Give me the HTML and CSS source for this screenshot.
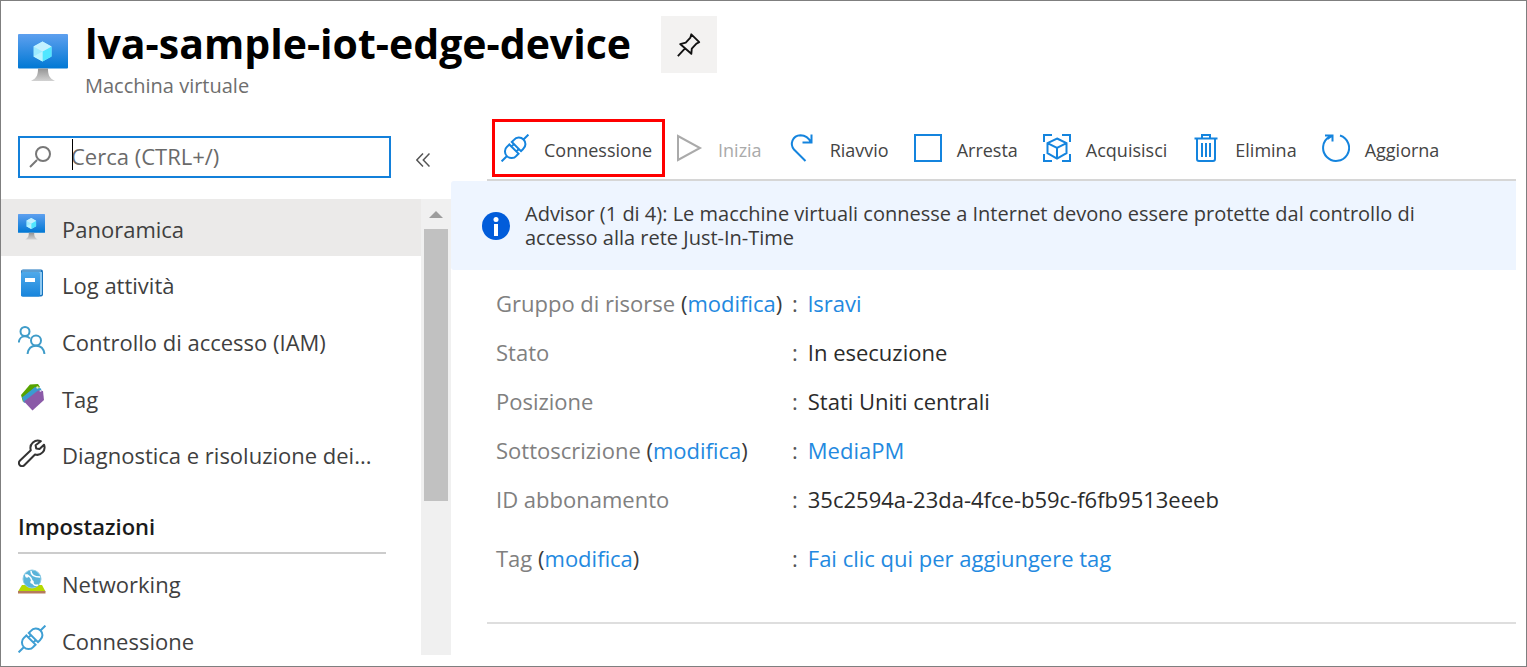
FILE: index.html
```html
<!DOCTYPE html>
<html lang="it">
<head>
<meta charset="utf-8">
<title>lva-sample-iot-edge-device</title>
<link rel="stylesheet" href="styles.css">
</head>
<body>
<svg class="defs" aria-hidden="true">
  <defs>
    <linearGradient id="screen" x1="0" y1="0" x2="0" y2="1"><stop offset="0" stop-color="#5ea0ef"/><stop offset="1" stop-color="#0078d4"/></linearGradient>
    <linearGradient id="stand" x1="0" y1="0" x2="0" y2="1"><stop offset="0" stop-color="#949494"/><stop offset="1" stop-color="#d2d2d2"/></linearGradient>
    <linearGradient id="book" x1="0" y1="0" x2="0" y2="1"><stop offset="0" stop-color="#4fa9ea"/><stop offset="1" stop-color="#1785dc"/></linearGradient>
    <symbol id="vm" viewBox="0 0 50 48">
      <rect width="50" height="34.500" rx="1" fill="url(#screen)"/>
      <path d="M20 34.500h10c0 6 1 9.500 7 12.500H13c6-3 7-6.500 7-12.500z" fill="url(#stand)"/>
      <path d="M24.500 7.500 33.500 12.500v10l-9 5-9-5v-10z" fill="#9cebff"/>
      <path d="M24.500 17.500l9-5v10l-9 5z" fill="#50e6ff"/>
      <path d="M24.500 7.500l9 5-9 5-9-5z" fill="#c3f1ff"/>
      <path d="M15.500 22.500l9-5v10z" fill="#b8f3ff"/>
    </symbol>
    <symbol id="plug" viewBox="0 0 28 28">
      <g fill="none" stroke="currentColor" stroke-width="2" transform="rotate(-45 14 14)">
        <path d="M-5 14H2M26 14h7M12.500 7.500H9.500a6.500 6.500 0 0 0-7 6.500 6.500 6.500 0 0 0 7 6.500h3zM16 7.500h3a6.500 6.500 0 0 1 7 6.500 6.500 6.500 0 0 1-7 6.500h-3zM12.500 10.500H16M12.500 17.500H16"/>
      </g>
    </symbol>
  </defs>
</svg>
<div class="frame">
  <header class="header">
    <svg class="header-icon" aria-hidden="true"><use href="#vm"/></svg>
    <div class="heading">
      <h1>lva-sample-iot-edge-device</h1>
      <p>Macchina virtuale</p>
    </div>
    <button class="pin" type="button" aria-label="Aggiungi">
      <svg viewBox="0 0 28 28" aria-hidden="true"><path d="M2 26 9.500 18M16.500 2.500 25 11l-3 1.500-5 5.500-.5 5.500L4.500 13l6-1.500 5-5.500z" fill="none" stroke="#111" stroke-width="2" stroke-linejoin="round"/></svg>
    </button>
  </header>

  <div class="body">
    <aside class="sidebar">
      <div class="search-row">
        <div class="search">
          <svg viewBox="0 0 22 22" aria-hidden="true"><path d="M1 21 8 14" /><circle cx="14" cy="8" r="7"/></svg>
          <input type="text" aria-label="Cerca" placeholder="Cerca (CTRL+/)">
          <span class="caret"></span>
        </div>
        <button class="collapse" type="button" aria-label="Comprimi">
          <svg viewBox="0 0 14 14" aria-hidden="true"><path d="M7 .5.800 7 7 13.500M13.500.5 7.300 7l6.200 6.500"/></svg>
        </button>
      </div>
      <div class="nav-wrap">
        <nav class="nav">
          <ul class="nav-list nav-main">
            <li><a class="nav-item selected" href="#"><svg viewBox="0 0 28 28" aria-hidden="true"><use href="#vm" width="27" height="26" y="1"/></svg>Panoramica</a></li>
            <li><a class="nav-item" href="#"><svg viewBox="0 0 28 28" aria-hidden="true"><rect x="3" y="0.500" width="22" height="27" rx="2" fill="#1673bd"/><path d="M5 3h19v22a1 1 0 0 1-1 1H5z" fill="#8fcaf3"/><rect x="3" y="3" width="19" height="24.500" rx="1.500" fill="url(#book)"/><path d="M4 2h19" stroke="#9cc9e8"/><rect x="7" y="9" width="10" height="4" fill="#fff"/></svg>Log attività</a></li>
            <li><a class="nav-item" href="#"><svg viewBox="0 0 28 28" aria-hidden="true"><g fill="none" stroke="#3f9cc9" stroke-width="2"><circle cx="7" cy="5.500" r="4.500"/><path d="M.8 16.500C1 12.500 4 10.300 7 10.300c2 0 4 .9 5 2.200"/><circle cx="18" cy="14.500" r="5"/><path d="M9.500 28c.7-5.200 4-8.200 8.500-8.200s7.800 3 8.500 8.200"/></g></svg>Controllo di accesso (IAM)</a></li>
            <li><a class="nav-item" href="#"><svg viewBox="0 0 28 28" aria-hidden="true"><path d="M3 12 12 1.500l8-.5 2 3L5 19z" fill="#57a300"/><path d="M4 14.500 17 4l6 1.500 1 5L6 20z" fill="#3a9bd0"/><path d="M6 18.500 20 7.500l5 .5 1 9L14.500 27.500z" fill="#8b5aa8"/><circle cx="19.500" cy="4.500" r="1.200" fill="#d9f0c4"/><circle cx="22.500" cy="8" r="1" fill="#d9c6e6"/></svg>Tag</a></li>
            <li><a class="nav-item" href="#"><svg viewBox="0 0 28 28" aria-hidden="true"><path d="M22.800 2.200a7.400 7.400 0 0 0-10 9L1.800 21.700a3.100 3.100 0 0 0 4.500 4.500L17 15.500a7.400 7.400 0 0 0 9-9.800L21.500 10l-3.300-.5-.6-3.200z" fill="none" stroke="#333" stroke-width="2" stroke-linejoin="round"/></svg>Diagnostica e risoluzione dei...</a></li>
          </ul>
          <h2>Impostazioni</h2>
          <ul class="nav-list">
            <li><a class="nav-item" href="#"><svg viewBox="0 0 28 28" aria-hidden="true"><path d="M4 17h20l3.500 6.500H0z" fill="#b5d900"/><path d="M0 23h27.500v2.500H0z" fill="#b57b5c"/><circle cx="14" cy="11" r="9" fill="#59b4d9" stroke="#8dcce6" stroke-width="1"/><path d="M7 7c4 0 6 2 7 6s3 5 6 4M13 3c0 4 3 6 9 6" fill="none" stroke="#fff" stroke-width="1.500"/><circle cx="9" cy="8" r="1.800" fill="#fff"/><circle cx="14" cy="14" r="1.800" fill="#fff"/></svg>Networking</a></li>
            <li><a class="nav-item side-plug" href="#"><svg aria-hidden="true"><use href="#plug"/></svg>Connessione</a></li>
          </ul>
        </nav>
        <div class="scrollbar" aria-hidden="true"><span class="arrow"></span><span class="thumb"></span></div>
      </div>
    </aside>

    <main class="main">
      <div class="toolbar">
        <button class="tool highlighted" type="button"><svg viewBox="0 0 28 28" aria-hidden="true"><use href="#plug"/></svg>Connessione</button>
        <button class="tool" type="button" disabled><svg viewBox="0 0 28 28" aria-hidden="true"><path d="M3 2v24L25 14z"/></svg>Inizia</button>
        <button class="tool" type="button"><svg viewBox="0 0 28 28" aria-hidden="true"><path d="M18.500 27 7 15.500C2.500 10 5.500 1.500 13.500 1.200c5.500 0 8.500 3 10.500 7.300M24.500.5v8H15.500"/></svg>Riavvio</button>
        <button class="tool" type="button"><svg viewBox="0 0 28 28" aria-hidden="true"><path d="M1 1h26v26H1z"/></svg>Arresta</button>
        <button class="tool" type="button"><svg viewBox="0 0 28 28" aria-hidden="true"><path d="M1 8V1h8M19 1h8v7M27 20v7h-8M9 27H1v-7M14 4.500l9.500 4.700v10L14 24.500l-9.500-5.300v-10zM4.500 9.200 14 14l9.500-4.800M14 14v10.500"/></svg>Acquisisci</button>
        <button class="tool" type="button"><svg viewBox="0 0 28 28" aria-hidden="true"><path d="M2.500 4.500h23M10 4V1h8v3M5 5v20a2 2 0 0 0 2 2h14a2 2 0 0 0 2-2V5M10 9v14M14 9v14M18 9v14"/></svg>Elimina</button>
        <button class="tool" type="button"><svg viewBox="0 0 28 28" aria-hidden="true"><path d="M18 1.500A13 13 0 1 1 7.500 2.700M3 1.500h7.500v6M10.500 1.500 5.500 5"/></svg>Aggiorna</button>
      </div>
      <div class="advisor">
        <svg viewBox="0 0 28 28" aria-hidden="true"><circle cx="14" cy="14" r="14" fill="#015cda"/><circle cx="14" cy="7.500" r="2.500" fill="#fff"/><path d="M12 12h4v12h-4z" fill="#fff"/></svg>
        <p>Advisor (1 di 4): Le macchine virtuali connesse a Internet devono essere protette dal controllo di accesso alla rete Just-In-Time</p>
      </div>
      <dl class="details">
        <div><dt>Gruppo di risorse <span>(<a href="#">modifica</a>)</span></dt><dd><a href="#">lsravi</a></dd></div>
        <div><dt>Stato</dt><dd>In esecuzione</dd></div>
        <div><dt>Posizione</dt><dd>Stati Uniti centrali</dd></div>
        <div><dt>Sottoscrizione <span>(<a href="#">modifica</a>)</span></dt><dd><a href="#">MediaPM</a></dd></div>
        <div><dt>ID abbonamento</dt><dd>35c2594a-23da-4fce-b59c-f6fb9513eeeb</dd></div>
        <div class="tags"><dt>Tag <span>(<a href="#">modifica</a>)</span></dt><dd><a href="#">Fai clic qui per aggiungere tag</a></dd></div>
      </dl>
    </main>
  </div>
</div>
</body>
</html>
```
FILE: styles.css
```css
* { box-sizing: border-box; }
body {
  margin: 0;
  background: #fff;
  color: #3b3a39;
  font-family: "Open Sans", "Noto Sans", sans-serif;
  font-size: 22px;
}
h1, h2, p, ul, dl, dd { margin: 0; padding: 0; }
ul { list-style: none; }
button { border: 0; padding: 0; background: none; font: inherit; color: inherit; }
a { color: #2389e0; text-decoration: none; }
svg { flex: none; }
.defs { position: absolute; width: 0; height: 0; }

.frame {
  display: flex;
  flex-direction: column;
  height: 100vh;
  border: 1px solid #7f7f7f;
  overflow: hidden;
}

.header {
  display: flex;
  align-items: flex-start;
  padding: 15px 17px 0;
  height: 118px;
}
.header-icon { width: 50px; height: 48px; margin-top: 18px; }
.heading { margin-left: 17px; }
.heading h1 { font-size: 41px; line-height: 54px; font-weight: 700; color: #000; }
.heading p { font-size: 20px; line-height: 32px; color: #6e6e6e; }
.pin {
  display: grid;
  place-items: center;
  width: 56px;
  height: 57px;
  margin-left: 30px;
  background: #f3f2f1;
}
.pin svg { width: 26px; height: 26px; }

.body {
  display: grid;
  grid-template-columns: 450px 1fr;
  flex: 1;
  min-height: 0;
}

.sidebar { display: flex; flex-direction: column; min-height: 0; padding-bottom: 11px; }
.search-row { display: flex; align-items: center; padding: 17px 17px 21px; }
.search {
  position: relative;
  display: flex;
  align-items: center;
  width: 373px;
  height: 42px;
  padding-left: 9px;
  border: 2px solid #1380da;
}
.search svg { width: 22px; height: 22px; fill: none; stroke: #777; stroke-width: 2; }
.search input {
  flex: 1;
  min-width: 0;
  padding: 0 0 2px 20px;
  border: 0;
  outline: 0;
  background: none;
  font: inherit;
}
.search input::placeholder { color: #6a6a6a; opacity: 1; }
.caret { position: absolute; left: 52px; top: 1px; width: 1px; height: 31px; background: #000; }
.collapse { display: flex; margin: 6px 0 0 25px; }
.collapse svg { width: 14px; height: 14px; fill: none; stroke: #555; stroke-width: 1.5; }

.nav-wrap { display: flex; flex: 1; min-height: 0; }
.nav { flex: 1; overflow: hidden; }
.nav-main { display: grid; grid-auto-rows: 1fr; min-height: 283px; }
.nav-item {
  display: flex;
  align-items: center;
  gap: 16px;
  height: 57px;
  padding: 3px 0 0 17px;
  color: #3f3f3f;
}
.nav-main .nav-item { height: 100%; }
.nav-item svg { width: 28px; height: 28px; margin-bottom: 4px; }
.selected { background: #ebeae9; }
.side-plug svg { color: #3f9fd4; }
.nav h2 {
  margin: 23px 35px 0 17px;
  padding-bottom: 5px;
  border-bottom: 2px solid #ccc;
  color: #1b1b1b;
  font-size: 22px;
  line-height: 42px;
  font-weight: 600;
}
.scrollbar {
  display: flex;
  flex-direction: column;
  align-items: center;
  width: 30px;
  background: #f0f0f0;
}
.arrow {
  margin: 12px 0 11px;
  border: 7px solid transparent;
  border-top-width: 0;
  border-bottom-color: #9d9d9d;
}
.thumb { width: 24px; height: 272px; background: #c1c1c1; }

.main { min-width: 0; padding-right: 10px; }
.toolbar {
  display: flex;
  gap: 25px;
  margin-left: 36px;
  padding-left: 5px;
  height: 62px;
  border-bottom: 2px solid #d6d6d6;
}
.tool {
  display: flex;
  align-items: center;
  gap: 15px;
  height: 58px;
  padding-top: 4px;
  font-size: 18px;
  color: #444;
  white-space: nowrap;
}
.tool svg { width: 28px; height: 28px; margin-bottom: 4px; fill: none; stroke: #1484de; stroke-width: 2; color: #1484de; }
.tool:disabled { color: #aaa; }
.tool:disabled svg { stroke: #aaa; }
.highlighted { padding: 4px 10px 0 6px; border: 3px solid #f00; margin-right: -15px; }
.advisor {
  display: flex;
  align-items: center;
  gap: 15px;
  height: 89px;
  padding: 0 60px 0 31px;
  background: #eef5ff;
  border-radius: 3px 0 0 3px;
}
.advisor svg { width: 28px; height: 28px; }
.advisor p { font-size: 20px; line-height: 24px; }
.details {
  margin-left: 36px;
  padding: 8px 0 40px 9px;
  border-bottom: 2px solid #dedede;
}
.details div { display: grid; grid-template-columns: 296px 1fr; align-items: center; min-height: 49px; }
.details dt { color: #808080; }
.details dt span { color: #3b3a39; }
.details dd { display: flex; gap: 10px; color: #2b2b2b; }
.details dd::before { content: ":"; color: #555; }
.details .tags { margin-top: 10px; }
```
